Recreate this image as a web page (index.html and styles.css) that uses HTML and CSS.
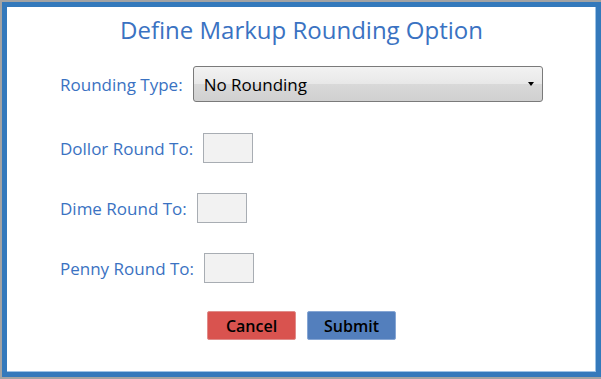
FILE: index.html
```
<!DOCTYPE html>
<html lang="en">
<head>
  <meta charset="UTF-8">
  <title>Define Markup Rounding Option</title>
  <link rel="stylesheet" href="styles.css">
</head>
<body>
  <div class="window">
    <div class="panel">
      <h2 class="title">Define Markup Rounding Option</h2>

      <!-- Rounding form -->
      <form class="rounding-form">
        <div class="row">
          <label for="rounding_type">Rounding Type:</label>
          <div class="select-box">
            <span>No Rounding</span>
            <span class="caret"></span>
          </div>
        </div>

        <div class="row">
          <label for="dollor_round">Dollor Round To:</label>
          <input type="text" id="dollor_round" class="small-input">
        </div>

        <div class="row">
          <label for="dime_round">Dime Round To:</label>
          <input type="text" id="dime_round" class="small-input">
        </div>

        <div class="row">
          <label for="penny_round">Penny Round To:</label>
          <input type="text" id="penny_round" class="small-input">
        </div>

        <div class="buttons">
          <button type="button" class="btn btn-cancel">Cancel</button>
          <button type="button" class="btn btn-submit">Submit</button>
        </div>
      </form>
    </div>
  </div>
</body>
</html>
```
FILE: styles.css
```
* {
  box-sizing: border-box;
}
body {
  margin: 0;
  font-family: "Open Sans", "Noto Sans", sans-serif;
  background-color: #ffffff;
}
.window {
  width: 601px;
  height: 379px;
  border-top: 2px solid #a3a3a3;
  border-left: 2px solid #a3a3a3;
  border-bottom: 2px solid #a3a3a3;
}
.panel {
  height: 100%;
  border: 5px solid #3479bb;
  box-shadow: inset -1px -1px 0 #9cc2e5;
  background-color: #ffffff;
}
.title {
  margin: 0;
  padding-top: 6px;
  height: 59px;
  font-size: 24px;
  font-weight: normal;
  color: #3a72c2;
  text-align: center;
}
.rounding-form {
  padding-left: 53px;
}
.row {
  display: flex;
  align-items: center;
  height: 30px;
  margin-bottom: 30px;
}
.row:first-child {
  height: 36px;
  margin-bottom: 31px;
}
label {
  font-size: 17px;
  color: #3a72c2;
  margin-right: 10px;
}
.select-box {
  display: flex;
  align-items: center;
  justify-content: space-between;
  width: 350px;
  height: 36px;
  padding: 0 8px 0 10px;
  border: 1px solid #7a7a7a;
  border-radius: 3px;
  background: linear-gradient(#f2f2f2 0%, #e8e8e8 50%, #d9d9d9 51%, #d0d0d0 100%);
  font-size: 17px;
  color: #000000;
}
.caret {
  width: 0;
  height: 0;
  border-left: 3px solid transparent;
  border-right: 3px solid transparent;
  border-top: 4px solid #000000;
}
.small-input {
  width: 50px;
  height: 30px;
  border: 1px solid #a8adb3;
  background-color: #f2f2f2;
  padding: 0;
}
.buttons {
  display: flex;
  justify-content: center;
  gap: 11px;
  margin-top: -2px;
  padding-right: 53px;
}
.btn {
  width: 89px;
  height: 29px;
  border: 1px solid transparent;
  border-radius: 2px;
  font-family: "Open Sans", "Noto Sans", sans-serif;
  font-size: 16px;
  font-weight: 600;
  color: #000000;
  padding: 0;
}
.btn-cancel {
  background-color: #d9534f;
  border-color: #e08c8a;
}
.btn-submit {
  background-color: #537fbd;
  border-color: #86a6d4;
}
```
